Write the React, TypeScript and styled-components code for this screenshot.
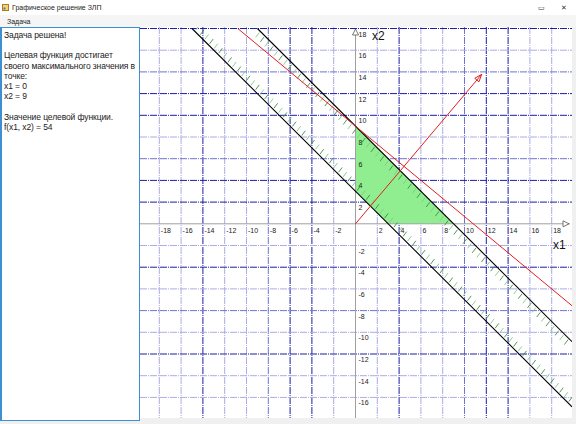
import styled, { createGlobalStyle } from 'styled-components';

const GlobalStyle = createGlobalStyle`
  html, body {
    margin: 0;
    padding: 0;
    background: #f0f0f0;
  }
  body {
    font-family: 'Liberation Sans', Arial, sans-serif;
  }
`;

// page coordinates of the plot
const X = (v: number) => 355.5 + 10.9 * v;
const Y = (v: number) => 223.8 - 10.85 * v;

const LEFT = 140;
const TOP = 27;
const RIGHT = 572;
const BOTTOM = 418;

const darkV = [-14, -6, -4, 4, 12, 14];
const midV = [-8, 10];
const darkH = [18, 12, 10, 4, 2, -4, -12];
const midH = [14, 6, -8];

const range = (from: number, to: number) => {
  const out: number[] = [];
  for (let v = from; v <= to; v += 2) if (v !== 0) out.push(v);
  return out;
};

const gridColor = (v: number, dark: number[], mid: number[]) =>
  dark.includes(v) ? '#1c1ca6' : mid.includes(v) ? '#7272d2' : '#acacE6';

// hatches along a segment, dx/dy is the screen direction of each stroke
function hatches(x1: number, y1: number, x2: number, y2: number, dx: number, dy: number) {
  const len = Math.hypot(x2 - x1, y2 - y1);
  const ux = (x2 - x1) / len;
  const uy = (y2 - y1) / len;
  const out: JSX.Element[] = [];
  let i = 0;
  for (let s = 4; s < len - 2; s += 6.5) {
    const px = x1 + ux * s + dx * 1.5;
    const py = y1 + uy * s + dy * 1.5;
    out.push(
      <line
        key={`${x1}-${i++}`}
        x1={px}
        y1={py}
        x2={px + dx * 6}
        y2={py + dy * 6}
        stroke={i % 2 ? '#3f8f3f' : '#86c886'}
        strokeWidth={0.9}
      />
    );
  }
  return out;
}

function Plot() {
  const xr = (RIGHT - 355.5) / 10.9;
  // x1 + x2 = 3 and x1 + x2 = 9, from x2 = 18 down to the right edge
  const l1 = { x1: X(-15), y1: Y(18), x2: RIGHT, y2: Y(3 - xr) };
  const l2 = { x1: X(-9), y1: Y(18), x2: RIGHT, y2: Y(9 - xr) };
  // 5 x1 + 6 x2 = 54
  const red = { x1: X(-10.8), y1: Y(18), x2: RIGHT, y2: Y((54 - 5 * xr) / 6) };
  const tip = { x: 481.7, y: 74.3 };
  const ox = X(0);
  const oy = Y(0);
  const ang = Math.atan2(tip.y - oy, tip.x - ox);
  const head = (d: number) => ({
    x: tip.x - 8 * Math.cos(ang + d),
    y: tip.y - 8 * Math.sin(ang + d),
  });
  const h1 = head(0.35);
  const h2 = head(-0.35);

  return (
    <ChartSvg viewBox={`${LEFT} ${TOP} ${RIGHT - LEFT} ${BOTTOM - TOP}`} width={RIGHT - LEFT} height={BOTTOM - TOP}>
      <rect x={LEFT} y={TOP} width={RIGHT - LEFT} height={BOTTOM - TOP} fill="#fff" />
      {range(-18, 18).map((v) => (
        <line
          key={`v${v}`}
          x1={X(v)}
          y1={TOP}
          x2={X(v)}
          y2={BOTTOM}
          stroke={gridColor(v, darkV, midV)}
          strokeWidth={1}
          strokeDasharray="7 1 1 1"
        />
      ))}
      {range(-16, 18).map((v) => (
        <line
          key={`h${v}`}
          x1={LEFT}
          y1={Y(v)}
          x2={RIGHT}
          y2={Y(v)}
          stroke={gridColor(v, darkH, midH)}
          strokeWidth={1}
          strokeDasharray="7 1 1 1"
        />
      ))}

      <polygon
        points={`${X(0)},${Y(3)} ${X(0)},${Y(9)} ${X(9)},${Y(0)} ${X(3)},${Y(0)}`}
        fill="#90ee90"
      />

      <line x1={LEFT} y1={oy} x2={RIGHT - 2} y2={oy} stroke="#a0a0a0" strokeWidth={1} />
      <line x1={ox} y1={BOTTOM} x2={ox} y2={TOP + 3} stroke="#a0a0a0" strokeWidth={1} />
      <polygon points={`${ox - 3},${TOP + 8} ${ox + 3},${TOP + 8} ${ox},${TOP + 2}`} fill="#fff" stroke="#555" strokeWidth={0.8} />
      <polygon points={`${RIGHT - 9},${oy - 3} ${RIGHT - 9},${oy + 3} ${RIGHT - 3},${oy}`} fill="#fff" stroke="#555" strokeWidth={0.8} />

      {range(-18, 18).map((v) => (
        <TickText key={`tx${v}`} x={X(v) + 1.5} y={oy + 9}>
          {v}
        </TickText>
      ))}
      {range(-16, 18).map((v) => (
        <TickText key={`ty${v}`} x={ox + 3} y={Y(v) + 8}>
          {v}
        </TickText>
      ))}
      <AxisText x={553} y={249}>x1</AxisText>
      <AxisText x={372} y={40}>x2</AxisText>

      {hatches(l2.x1, l2.y1, l2.x2, l2.y2, -0.6, 0.8)}
      {hatches(l1.x1, l1.y1, l1.x2, l1.y2, 0.6, -0.8)}

      <line {...l1} stroke="#000" strokeWidth={1.1} />
      <line {...l2} stroke="#000" strokeWidth={1.1} />
      <line {...red} stroke="#e02020" strokeWidth={1} />

      <line x1={ox} y1={oy} x2={tip.x} y2={tip.y} stroke="#e02020" strokeWidth={1} />
      <polygon points={`${tip.x},${tip.y} ${h1.x},${h1.y} ${h2.x},${h2.y}`} fill="none" stroke="#e02020" strokeWidth={1} />
    </ChartSvg>
  );
}

export default function App() {
  return (
    <>
      <GlobalStyle />
      <Window>
        <TitleBar>
          <AppIcon>
            <svg width="7" height="7" viewBox="0 0 7 7">
              <rect x="0.5" y="0.5" width="6" height="6" fill="#f6d36b" stroke="#b07a20" strokeWidth="1" />
              <rect x="1.5" y="3.5" width="2" height="2" fill="#3d7bd0" />
            </svg>
          </AppIcon>
          <Title>Графическое решение ЗЛП</Title>
          <WinButtons>
            <WinButton>▭</WinButton>
            <WinButton>✕</WinButton>
          </WinButtons>
        </TitleBar>
        <MenuBar>
          <MenuItem>Задача</MenuItem>
        </MenuBar>
        <Body>
          <Panel>
            <Line>Задача решена!</Line>
            <Line>&nbsp;</Line>
            <Line>Целевая функция достигает</Line>
            <Line>своего максимального значения в</Line>
            <Line>точке:</Line>
            <Line>x1 = 0</Line>
            <Line>x2 = 9</Line>
            <Line>&nbsp;</Line>
            <Line>Значение целевой функции.</Line>
            <Line>f(x1, x2) = 54</Line>
          </Panel>
          <Plot />
        </Body>
      </Window>
    </>
  );
}

const Window = styled.div`
  width: 576px;
  height: 424px;
  display: flex;
  flex-direction: column;
  background: #f0f0f0;
  overflow: hidden;
`;

const TitleBar = styled.div`
  height: 15px;
  display: flex;
  align-items: center;
  background: #fff;
  padding-left: 2px;
  gap: 3px;
`;

const AppIcon = styled.div`
  width: 7px;
  height: 7px;
  display: flex;
`;

const Title = styled.span`
  font-size: 7px;
  color: #222;
  flex: 1;
`;

const WinButtons = styled.div`
  display: flex;
  gap: 16px;
  padding-right: 9px;
`;

const WinButton = styled.span`
  font-size: 7px;
  color: #333;
`;

const MenuBar = styled.div`
  height: 12px;
  display: flex;
  align-items: center;
  background: #f5f5f5;
  padding-left: 7px;
`;

const MenuItem = styled.span`
  font-size: 7px;
  color: #222;
`;

const Body = styled.div`
  display: flex;
  align-items: flex-start;
  flex: 1;
`;

const Panel = styled.div`
  width: 135px;
  height: 390px;
  background: #fff;
  border: 1px solid #3e8fd2;
  border-left-width: 2px;
  padding: 2px 0 0 2px;
  box-sizing: content-box;
  flex-shrink: 0;
  overflow: hidden;
`;

const Line = styled.div`
  font-size: 8.5px;
  line-height: 10.2px;
  letter-spacing: -0.1px;
  color: #1a1a1a;
  white-space: nowrap;
`;

const ChartSvg = styled.svg`
  display: block;
  flex-shrink: 0;
`;

const TickText = styled.text`
  font-family: 'Liberation Sans', Arial, sans-serif;
  font-size: 7px;
  fill: #222;
`;

const AxisText = styled.text`
  font-family: 'Liberation Sans', Arial, sans-serif;
  font-size: 12px;
  fill: #111;
`;
